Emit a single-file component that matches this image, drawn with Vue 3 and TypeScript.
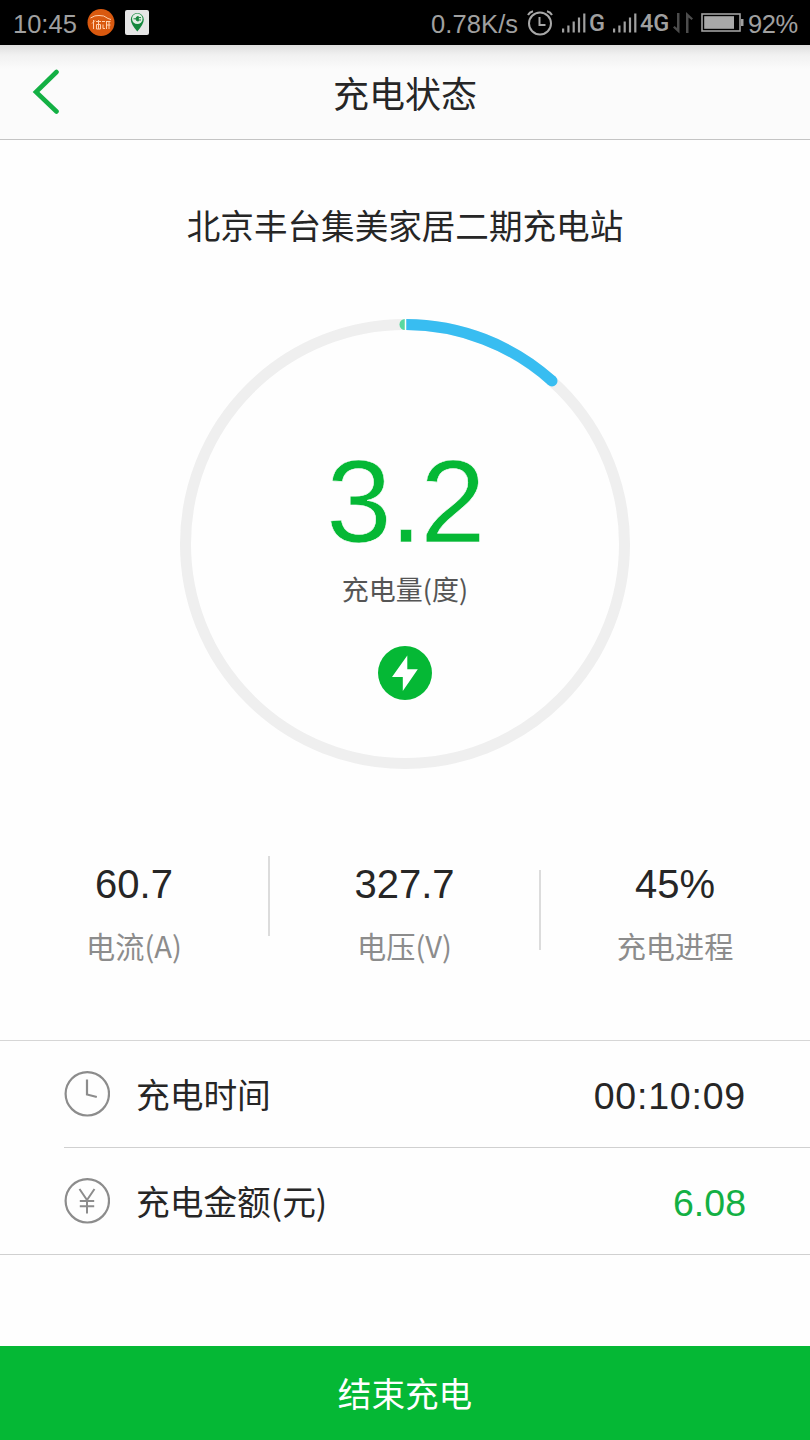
<script setup lang="ts">
interface Stat {
  value: string
  label: string
}

const station = '北京丰台集美家居二期充电站'
const stats: Stat[] = [
  { value: '60.7', label: '电流(A)' },
  { value: '327.7', label: '电压(V)' },
  { value: '45%', label: '充电进程' },
]
const bars = [4, 7, 11, 15, 19]
</script>

<template>
  <div class="screen">
    <div class="status">
      <span class="clock">10:45</span>
      <svg class="app-a" width="28" height="28" viewBox="0 0 28 28">
        <circle cx="14" cy="13.500" r="13.500" fill="#d9590f" />
        <g fill="none" stroke="#ffd0ae" stroke-width="1">
          <path d="M3.500 9Q8 6 12 6.500Q17 6 21 9.500L24 10.500" />
          <path d="M6.500 11v9M5 14.500l3-3M9 12.500h5M9.500 15.500h4v4.500h-4zM11.500 11v9M15 12.500h3M16 15.500v4h2M19 12.500h4.500M19.500 12.500v7.500M22 12v8M19.500 16h4" />
        </g>
      </svg>
      <svg class="app-b" width="24" height="25" viewBox="0 0 24 25">
        <rect width="24" height="25" rx="2" fill="#e6e6e6" />
        <path d="M12.300 21.500Q5.800 14 5.800 9.500A6.500 6.500 0 0 1 18.800 9.500Q18.800 14 12.300 21.500Z" fill="#15873d" />
        <circle cx="12.300" cy="8.800" r="5.300" fill="#e2eee4" />
        <path d="M8.500 8.800h2.500M11 8.800a2.300 2.300 0 0 1 2.300-2.300v4.600A2.300 2.300 0 0 1 11 8.800ZM13.500 7.600h2.500M13.500 10h2.500" fill="#15873d" stroke="#15873d" stroke-width="1" />
      </svg>
      <span class="speed">0.78K/s</span>
      <svg class="alarm" width="26" height="26" viewBox="0 0 26 26" fill="none" stroke="#a8a8a8" stroke-width="2">
        <circle cx="13" cy="13.500" r="11" />
        <path d="M12.500 7v8h6" />
        <path d="M1 5Q2.500 2 6 1.200M25 5Q23.500 2 20 1.200" />
      </svg>
      <svg class="signal" width="24" height="20" viewBox="0 0 24 20">
        <rect v-for="(h, i) in bars" :key="i" :x="i * 5.300" :y="19.500 - h" width="2.200" :height="h" fill="#a0a0a0" />
      </svg>
      <span class="net g">G</span>
      <svg class="signal second" width="24" height="20" viewBox="0 0 24 20">
        <rect v-for="(h, i) in bars" :key="i" :x="i * 5.300" :y="19.500 - h" width="2.200" :height="h" fill="#a0a0a0" />
      </svg>
      <span class="net four">4G</span>
      <svg class="arrows" width="20" height="22" viewBox="0 0 20 22">
        <path d="M4 1H6.500V21.500L0 15.500L1.500 14L4 16ZM13 21H15.500V5.500L18.500 8L20 6.500L13 0Z" fill="#4c4c4c" />
      </svg>
      <svg class="battery" width="43" height="19" viewBox="0 0 43 19">
        <rect x="1" y="1" width="38" height="17" fill="none" stroke="#a0a0a0" stroke-width="1.600" />
        <rect x="3.200" y="3.200" width="29.800" height="12.600" fill="#a8a8a8" />
        <path d="M40 6h2.500v7H40z" fill="#a0a0a0" />
      </svg>
      <span class="pct">92%</span>
    </div>

    <header class="nav">
      <svg class="back" width="28" height="46" viewBox="0 0 28 46">
        <path d="M24.500 3L4 23L24.500 42.500" fill="none" stroke="#13b044" stroke-width="4.600" stroke-linecap="round" />
      </svg>
      <h1>充电状态</h1>
    </header>

    <h2 class="station">{{ station }}</h2>

    <div class="gauge">
      <svg class="ring" width="450" height="450" viewBox="0 0 450 450" fill="none">
        <circle cx="225" cy="225" r="219.500" stroke="#efefef" stroke-width="11" />
        <path d="M225 0A5.500 5.500 0 0 0 225 11Z" fill="#58d8a0" />
        <path d="M226 5.500A219.500 219.500 0 0 1 372 61.900" stroke="#38bdf1" stroke-width="11" />
        <circle cx="372" cy="61.900" r="5.500" fill="#38bdf1" />
        <path d="M225.500 0V11.500" stroke="#fff" stroke-width="1.500" />
      </svg>
      <div class="readout">
        <strong>3.2</strong>
        <span>充电量(度)</span>
        <svg width="54" height="54" viewBox="0 0 54 54">
          <circle cx="27" cy="27" r="27" fill="#05b835" />
          <path d="M29.300 9.500L14 31H24.800V45L39.800 23.300H29.300Z" fill="#fff" />
        </svg>
      </div>
    </div>

    <section class="stats">
      <div v-for="s in stats" :key="s.label" class="stat">
        <b>{{ s.value }}</b>
        <span>{{ s.label }}</span>
      </div>
    </section>

    <section class="rows">
      <div class="row">
        <svg width="46" height="46" viewBox="0 0 46 46" fill="none" stroke="#8c8c8c" stroke-width="2.200">
          <circle cx="23.300" cy="22.800" r="21.700" />
          <path d="M23 8.500V23.500L32.800 26" />
        </svg>
        <span class="name">充电时间</span>
        <span class="val time">00:10:09</span>
      </div>
      <div class="row last">
        <svg width="46" height="46" viewBox="0 0 46 46" fill="none" stroke="#8c8c8c" stroke-width="2.200">
          <circle cx="23.300" cy="22.800" r="21.700" />
          <path d="M15.500 11L23 22L30.500 11M23 21.500V35.500M15.800 23H30.200M15.800 28.300H30.200" stroke-width="2" />
        </svg>
        <span class="name">充电金额(元)</span>
        <span class="val money">6.08</span>
      </div>
    </section>

    <button class="finish" type="button">结束充电</button>
  </div>
</template>

<style>
body {
  margin: 0;
  background: #fefefe;
}
</style>

<style scoped>
.screen {
  width: 810px;
  height: 1440px;
  display: flex;
  flex-direction: column;
  overflow: hidden;
  background: #fefefe;
  color: #262626;
  font-family: "Noto Sans CJK SC", sans-serif;
  font-weight: 400;
}
h1, h2 {
  margin: 0;
  font-weight: 400;
}
.status {
  height: 45px;
  flex: none;
  display: flex;
  align-items: center;
  background: #000;
  color: #a0a0a0;
  font: 25.5px/45px "Liberation Sans", Arial, sans-serif;
  white-space: nowrap;
}
.status svg {
  flex: none;
}
.status span {
  flex: none;
  padding-top: 3px;
}
.clock { width: 74px; padding-left: 13px; }
.app-b { margin: 0 0 0 10px; }
.speed { margin-left: 282px; width: 96px; letter-spacing: 0.1px; }
.signal { margin-left: 9px; }
.status .net { font: 500 23.5px/45px Roboto, sans-serif; padding-top: 1px; }
.g { width: 18px; margin-left: 3px; }
.second { margin-left: 6px; }
.four { width: 30px; margin-left: 3px; }
.arrows { margin-left: 3px; }
.battery { margin-left: 8px; }
.pct { margin-left: 4px; letter-spacing: -0.4px; }

.nav {
  height: 94px;
  flex: none;
  display: grid;
  grid-template-columns: 72px 1fr 72px;
  align-items: center;
  border-bottom: 1px solid #c4c4c4;
  background: linear-gradient(#dedede, #f1f1f1 10px, #fbfbfb 24px);
}
.back { margin-left: 32px; }
h1 {
  font-size: 36px;
  line-height: 54px;
  text-align: center;
}
.station {
  margin-top: 60px;
  height: 50px;
  flex: none;
  font-size: 33.6px;
  line-height: 50px;
  text-align: center;
}
.gauge {
  flex: none;
  width: 450px;
  height: 450px;
  margin: 69px auto 0;
  display: grid;
}
.ring, .readout {
  grid-area: 1 / 1;
}
.readout {
  display: flex;
  flex-direction: column;
  align-items: center;
  padding-top: 118px;
}
.readout strong {
  font: 400 117.5px/130px "Liberation Sans", Arial, sans-serif;
  letter-spacing: -2px;
  color: #05b835;
  -webkit-text-stroke: 0.6px #fefefe;
}
.readout span {
  margin-top: 2px;
  font-size: 27px;
  line-height: 40px;
  color: #555;
}
.readout svg { margin: 37px 1px 0 0; }

.stats {
  flex: none;
  margin-top: 87px;
  height: 184px;
  display: grid;
  grid-template-columns: 270px 271px 1fr;
}
.stat {
  display: flex;
  flex-direction: column;
  align-items: center;
  padding-right: 2px;
  background: linear-gradient(#dcdcdc, #dcdcdc) right 0 top 0 / 2px 80px no-repeat;
}
.stat:nth-child(2) { background-position: right 0 top 14px; }
.stat:nth-child(3) { background: none; padding-right: 1px; }
.stat b {
  font: 400 40px/46px "Liberation Sans", Arial, sans-serif;
  margin-top: 5px;
}
.stat span {
  margin-top: 16px;
  font-size: 29.2px;
  line-height: 44px;
  color: #8c8c8c;
}
.rows {
  flex: none;
  height: 213px;
  border-top: 1px solid #d6d6d6;
  border-bottom: 1px solid #d0d0d0;
}
.row {
  height: 106px;
  margin-left: 64px;
  padding-right: 64px;
  display: flex;
  align-items: center;
  border-bottom: 1px solid #d0d0d0;
}
.row.last { border: 0; }
.name {
  margin-left: 26px;
  font-size: 33.7px;
  line-height: 50px;
}
.val {
  margin-left: auto;
  font: 37.5px/44px "Liberation Sans", Arial, sans-serif;
  padding-top: 4px;
}
.time { letter-spacing: 0.8px; }
.money { color: #13b044; }
.finish {
  flex: none;
  height: 94px;
  margin-top: auto;
  padding: 0;
  border: 0;
  background: #05b835;
  color: #fff;
  font: 400 33.6px/94px "Noto Sans CJK SC", sans-serif;
}
</style>
